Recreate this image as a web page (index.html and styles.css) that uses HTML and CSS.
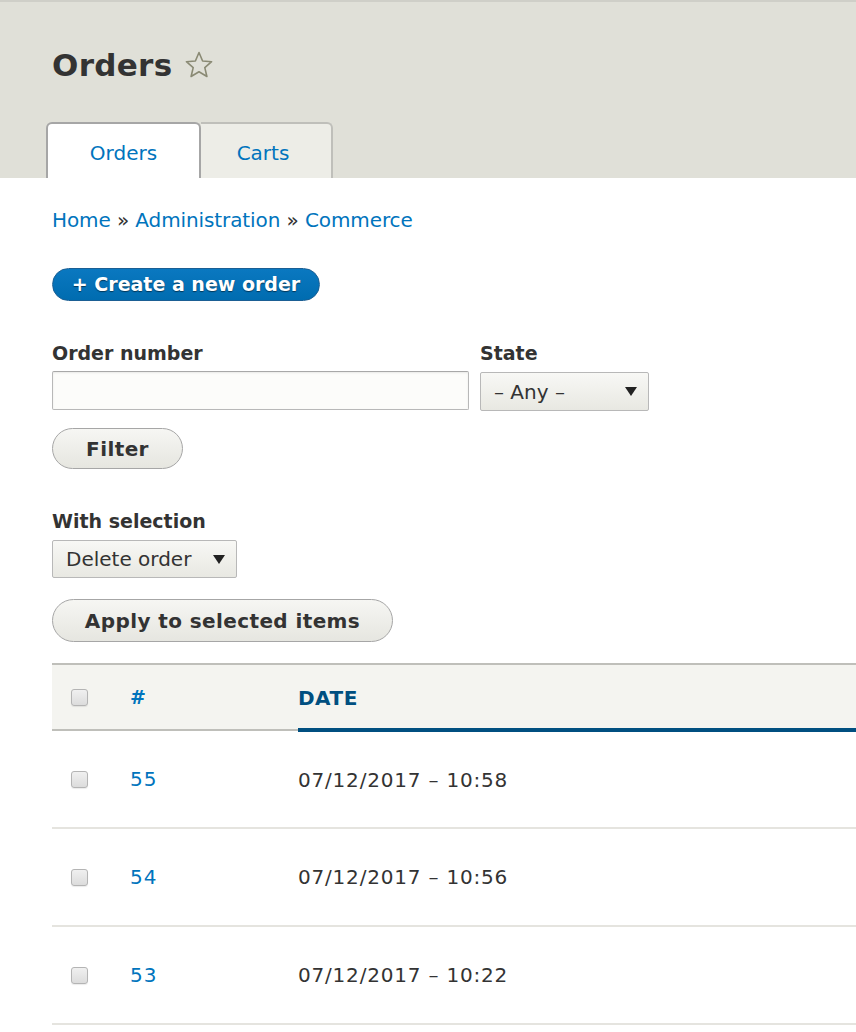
FILE: index.html
```html
<!DOCTYPE html>
<html>
<head>
<meta charset="utf-8">
<link rel="stylesheet" href="styles.css">
</head>
<body>
<header class="page-header">
  <h1 class="title">Orders
    <svg class="star" width="30" height="30" viewBox="0 0 30 30"><path d="M15 2.5 L18.6 11 L27.6 11.7 L20.8 17.6 L22.9 26.5 L15 21.8 L7.1 26.5 L9.2 17.6 L2.4 11.7 L11.4 11 Z" fill="none" stroke="#8a8a74" stroke-width="1.6" stroke-linejoin="round"/></svg>
  </h1>
  <nav class="tabs">
    <a class="tab active">Orders</a>
    <a class="tab">Carts</a>
  </nav>
</header>
<main class="content">
  <div class="breadcrumb"><a>Home</a> » <a>Administration</a> » <a>Commerce</a></div>
  <div class="action"><a class="btn-primary">+ Create a new order</a></div>
  <div class="filters">
    <div class="field">
      <label>Order number</label>
      <div class="text-input"></div>
    </div>
    <div class="field">
      <label>State</label>
      <div class="select state"><span>– Any –</span><span class="arrow"></span></div>
    </div>
  </div>
  <div class="btn-row"><span class="btn filter">Filter</span></div>
  <div class="field bulk">
    <label>With selection</label>
    <div class="select bulk-select"><span>Delete order</span><span class="arrow"></span></div>
  </div>
  <div class="btn-row"><span class="btn apply">Apply to selected items</span></div>
  <table class="orders">
    <thead>
      <tr>
        <th class="c-check"><span class="cb"></span></th>
        <th class="c-num"><a>#</a></th>
        <th class="c-date active">DATE</th>
      </tr>
    </thead>
    <tbody>
      <tr><td class="c-check"><span class="cb"></span></td><td class="c-num"><a>55</a></td><td class="c-date">07/12/2017 – 10:58</td></tr>
      <tr><td class="c-check"><span class="cb"></span></td><td class="c-num"><a>54</a></td><td class="c-date">07/12/2017 – 10:56</td></tr>
      <tr><td class="c-check"><span class="cb"></span></td><td class="c-num"><a>53</a></td><td class="c-date">07/12/2017 – 10:22</td></tr>
    </tbody>
  </table>
</main>
</body>
</html>
```

FILE: styles.css
```css
* { box-sizing: border-box; }
html, body { margin: 0; padding: 0; }
body {
  font-family: "DejaVu Sans", Verdana, sans-serif;
  color: #333;
  background: #fff;
  width: 856px;
  overflow: hidden;
}
a { color: #0074bd; text-decoration: none; }

.page-header {
  background: #e0e0d8;
  border-top: 2px solid #cfcfc8;
  height: 178px;
  padding: 0 0 0 46px;
  display: flex;
  flex-direction: column;
}
.title {
  margin: 42px 0 0 6px;
  font-size: 31px;
  font-weight: bold;
  color: #333;
  line-height: 42px;
  display: flex;
  align-items: center;
  gap: 12px;
  letter-spacing: 0.3px;
}
.tabs {
  margin-top: auto;
  display: flex;
  height: 56px;
}
.tab {
  display: flex;
  align-items: center;
  justify-content: center;
  font-size: 20px;
  color: #0074bd;
  background: #ededE7;
  padding-top: 4px;
}
.tab.active {
  width: 155px;
  background: #fff;
  border: 2px solid #a6a6a6;
  border-bottom: none;
  border-radius: 6px 6px 0 0;
}
.tab:not(.active) {
  width: 132px;
  border-style: solid;
  border-width: 2px 2px 0 0;
  border-color: #bfbfba;
  border-radius: 0 6px 0 0;
  padding-right: 6px;
}

.content {
  padding: 0 0 0 52px;
}
.breadcrumb {
  margin-top: 29px;
  font-size: 20px;
  line-height: 26px;
  color: #333;
  letter-spacing: -0.1px;
}
.action { margin-top: 35px; display: flex; }
.btn-primary {
  display: inline-flex;
  align-items: center;
  justify-content: center;
  width: 268px;
  height: 33px;
  border-radius: 17px;
  background: linear-gradient(#0a78c0, #006cb0);
  border: 1px solid #1b5f94;
  color: #fff;
  font-weight: bold;
  font-size: 19px;
  letter-spacing: 0px;
  text-shadow: 0 1px 1px rgba(0,0,0,0.5);
  padding-bottom: 1px;
}

.filters {
  margin-top: 40px;
  display: flex;
  gap: 11px;
}
.field { display: flex; flex-direction: column; }
.field label {
  font-size: 19px;
  font-weight: bold;
  line-height: 24px;
  color: #333;
  margin-bottom: 6px;
}
.text-input {
  width: 417px;
  height: 39px;
  border: 1px solid #b8b8b8;
  border-top-color: #a8a8a8;
  border-radius: 2px;
  background: #fcfcfa;
  box-shadow: inset 0 1px 2px rgba(0,0,0,0.08);
}
.select {
  display: flex;
  align-items: center;
  justify-content: space-between;
  border: 1px solid #b8b8b8;
  border-radius: 2px;
  background: linear-gradient(#f8f8f5, #e8e8e2);
  font-size: 20px;
  color: #333;
  padding: 0 11px 0 13px;
}
.select.state { width: 169px; height: 39px; margin-top: 1px; }
.arrow {
  width: 0; height: 0;
  border-left: 6px solid transparent;
  border-right: 6px solid transparent;
  border-top: 9px solid #222;
}
.btn-row { display: flex; }
.btn {
  display: inline-flex;
  align-items: center;
  justify-content: center;
  border: 1px solid #a6a6a6;
  border-radius: 22px;
  background: linear-gradient(#f6f6f3, #e6e6e0);
  font-weight: bold;
  font-size: 20px;
  color: #333;
  letter-spacing: 0.4px;
}
.filters + .btn-row { margin-top: 17px; }
.btn.filter { width: 131px; height: 41px; }
.field.bulk { margin-top: 40px; }
.field.bulk label { margin-bottom: 7px; }
.select.bulk-select { width: 185px; height: 38px; }
.bulk + .btn-row { margin-top: 21px; }
.btn.apply { width: 341px; height: 43px; }

.orders {
  margin-top: 21px;
  width: calc(100% + 20px);
  border-collapse: collapse;
  font-size: 20px;
}
.orders thead tr {
  background: #f4f4f0;
  border-top: 2px solid #bfbfba;
  border-bottom: 2px solid #bfbfba;
}
.orders th {
  height: 66px;
  text-align: left;
  padding: 0;
  font-weight: bold;
  vertical-align: middle;
}
.orders th.c-date {
  color: #004f80;
  letter-spacing: 0.5px;
  border-bottom: 4px solid #004f80;
  padding-top: 2px;
}
.orders th.c-num a { font-weight: bold; font-size: 19px; }
.c-check { width: 78px; padding-left: 19px !important; }
.c-num { width: 168px; }
.orders td {
  height: 98px;
  padding: 0;
  border-bottom: 2px solid #e5e4df;
  vertical-align: middle;
  letter-spacing: 0.8px;
}
.orders td.c-num a { letter-spacing: 1px; }
.cb {
  display: block;
  width: 17px;
  height: 17px;
  border: 1px solid #b4b4b4;
  border-radius: 3px;
  background: linear-gradient(#f0f0f0, #dcdcdc);
  box-shadow: 0 1px 1px rgba(0,0,0,0.08);
}
.orders td .cb { margin-top: 1px; }
```
